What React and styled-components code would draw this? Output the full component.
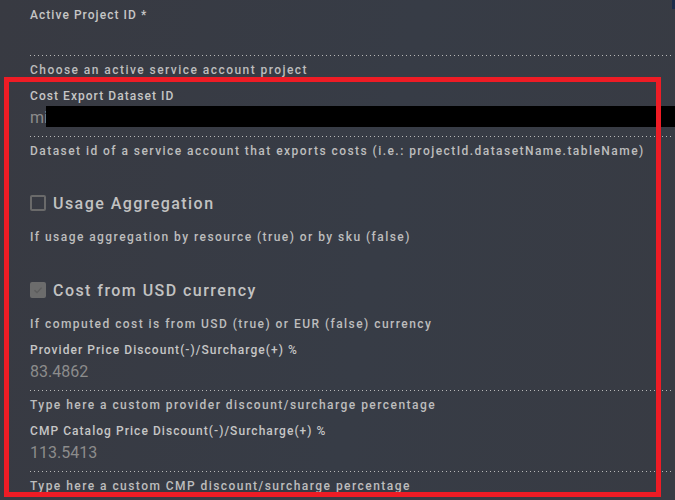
import styled, { createGlobalStyle } from 'styled-components'

const GlobalStyle = createGlobalStyle`
	html, body {
		margin: 0;
		padding: 0;
		background: #383b43;
	}
	body {
		font-family: Roboto, 'Liberation Sans', sans-serif;
		color: #c4c4c4;
	}
`

const TextField = ({ label, value = '', helper, redacted = false }) => {
	return (
		<S.Div_Field>
			<S.P_Label>{label}</S.P_Label>
			<S.Div_Input>
				<S.Spa_Value>{value}</S.Spa_Value>
				{redacted && <S.Div_Redaction />}
			</S.Div_Input>
			<S.P_Helper>{helper}</S.P_Helper>
		</S.Div_Field>
	)
}

const CheckField = ({ label, helper, checked = false, top }) => {
	return (
		<S.Div_CheckField $top={top}>
			<S.Lab_CheckRow>
				<S.Spa_Box $checked={checked}>
					{checked && (
						<svg width="12" height="12" viewBox="0 0 12 12">
							<path d="M2.5 6.2 L5 8.6 L9.6 3.6" fill="none" stroke="#5c5c5c" strokeWidth="1.4" />
						</svg>
					)}
				</S.Spa_Box>
				<S.Spa_CheckLabel>{label}</S.Spa_CheckLabel>
			</S.Lab_CheckRow>
			<S.P_Helper $checkHelper>{helper}</S.P_Helper>
		</S.Div_CheckField>
	)
}

const App = () => {
	return (
		<S.Div_Page>
			<GlobalStyle />
			<TextField label="Active Project ID *" helper="Choose an active service account project" />
			<TextField
				label="Cost Export Dataset ID"
				value="mi"
				redacted
				helper="Dataset id of a service account that exports costs (i.e.: projectId.datasetName.tableName)"
			/>
			<CheckField
				top={32}
				label="Usage Aggregation"
				helper="If usage aggregation by resource (true) or by sku (false)"
			/>
			<CheckField
				top={33}
				checked
				label="Cost from USD currency"
				helper="If computed cost is from USD (true) or EUR (false) currency"
			/>
			<TextField
				label="Provider Price Discount(-)/Surcharge(+) %"
				value="83.4862"
				helper="Type here a custom provider discount/surcharge percentage"
			/>
			<TextField
				label="CMP Catalog Price Discount(-)/Surcharge(+) %"
				value="113.5413"
				helper="Type here a custom CMP discount/surcharge percentage"
			/>
			<S.Div_Highlight />
			<S.Div_EdgeMark />
		</S.Div_Page>
	)
}

export default App

const Div_Page = styled.div`
	position: relative;
	width: 675px;
	height: 500px;
	box-sizing: border-box;
	padding: 7px 3px 0 30px;
	overflow: hidden;
	background: linear-gradient(100deg, #383a42 0%, #373c46 55%, #383b43 100%);
`

const Div_Field = styled.div`
	margin-bottom: 10px;
`

const P_Label = styled.p`
	margin: 0;
	font-size: 12px;
	line-height: 16px;
	font-weight: 500;
	letter-spacing: 1.05px;
	color: #c6c6c6;
`

const Div_Input = styled.div`
	position: relative;
	height: 33px;
	box-sizing: border-box;
	padding-top: 4px;
	background-image: linear-gradient(to right, #b8b8b8 1px, transparent 1px);
	background-size: 4px 1px;
	background-repeat: repeat-x;
	background-position: left bottom;
`

const Spa_Value = styled.span`
	display: block;
	font-size: 16px;
	line-height: 20px;
	color: #8c8c8c;
`

const Div_Redaction = styled.div`
	position: absolute;
	left: 16px;
	top: 2px;
	width: 700px;
	height: 21px;
	background: #000;
`

const P_Helper = styled.p`
	margin: ${({ $checkHelper }) => ($checkHelper ? '14px' : '6px')} 0 0;
	font-size: 12px;
	line-height: 16px;
	font-weight: 500;
	letter-spacing: 1.45px;
	color: #bdbdbd;
`

const Div_CheckField = styled.div`
	margin-top: ${({ $top }) => $top}px;
	margin-bottom: 10px;
`

const Lab_CheckRow = styled.label`
	display: flex;
	align-items: center;
	gap: 7px;
	height: 24px;
`

const Spa_Box = styled.span`
	width: 16px;
	height: 16px;
	box-sizing: border-box;
	border-radius: 2px;
	display: flex;
	align-items: center;
	justify-content: center;
	border: 2px solid ${({ $checked }) => ($checked ? '#6c6c6c' : '#6a6a6a')};
	background: ${({ $checked }) => ($checked ? '#6c6c6c' : 'transparent')};
`

const Spa_CheckLabel = styled.span`
	font-size: 16px;
	font-weight: 500;
	letter-spacing: 1.45px;
	color: #c2c2c2;
`

const Div_Highlight = styled.div`
	position: absolute;
	left: 4px;
	top: 77px;
	width: 657px;
	height: 420px;
	box-sizing: border-box;
	border: 5px solid #ee1c25;
	pointer-events: none;
`

const Div_EdgeMark = styled.div`
	position: absolute;
	right: 0;
	top: 0;
	width: 3px;
	height: 9px;
	background: #1d2d4a;
`

const S = {
	Div_Page,
	Div_Field,
	P_Label,
	Div_Input,
	Spa_Value,
	Div_Redaction,
	P_Helper,
	Div_CheckField,
	Lab_CheckRow,
	Spa_Box,
	Spa_CheckLabel,
	Div_Highlight,
	Div_EdgeMark,
}
